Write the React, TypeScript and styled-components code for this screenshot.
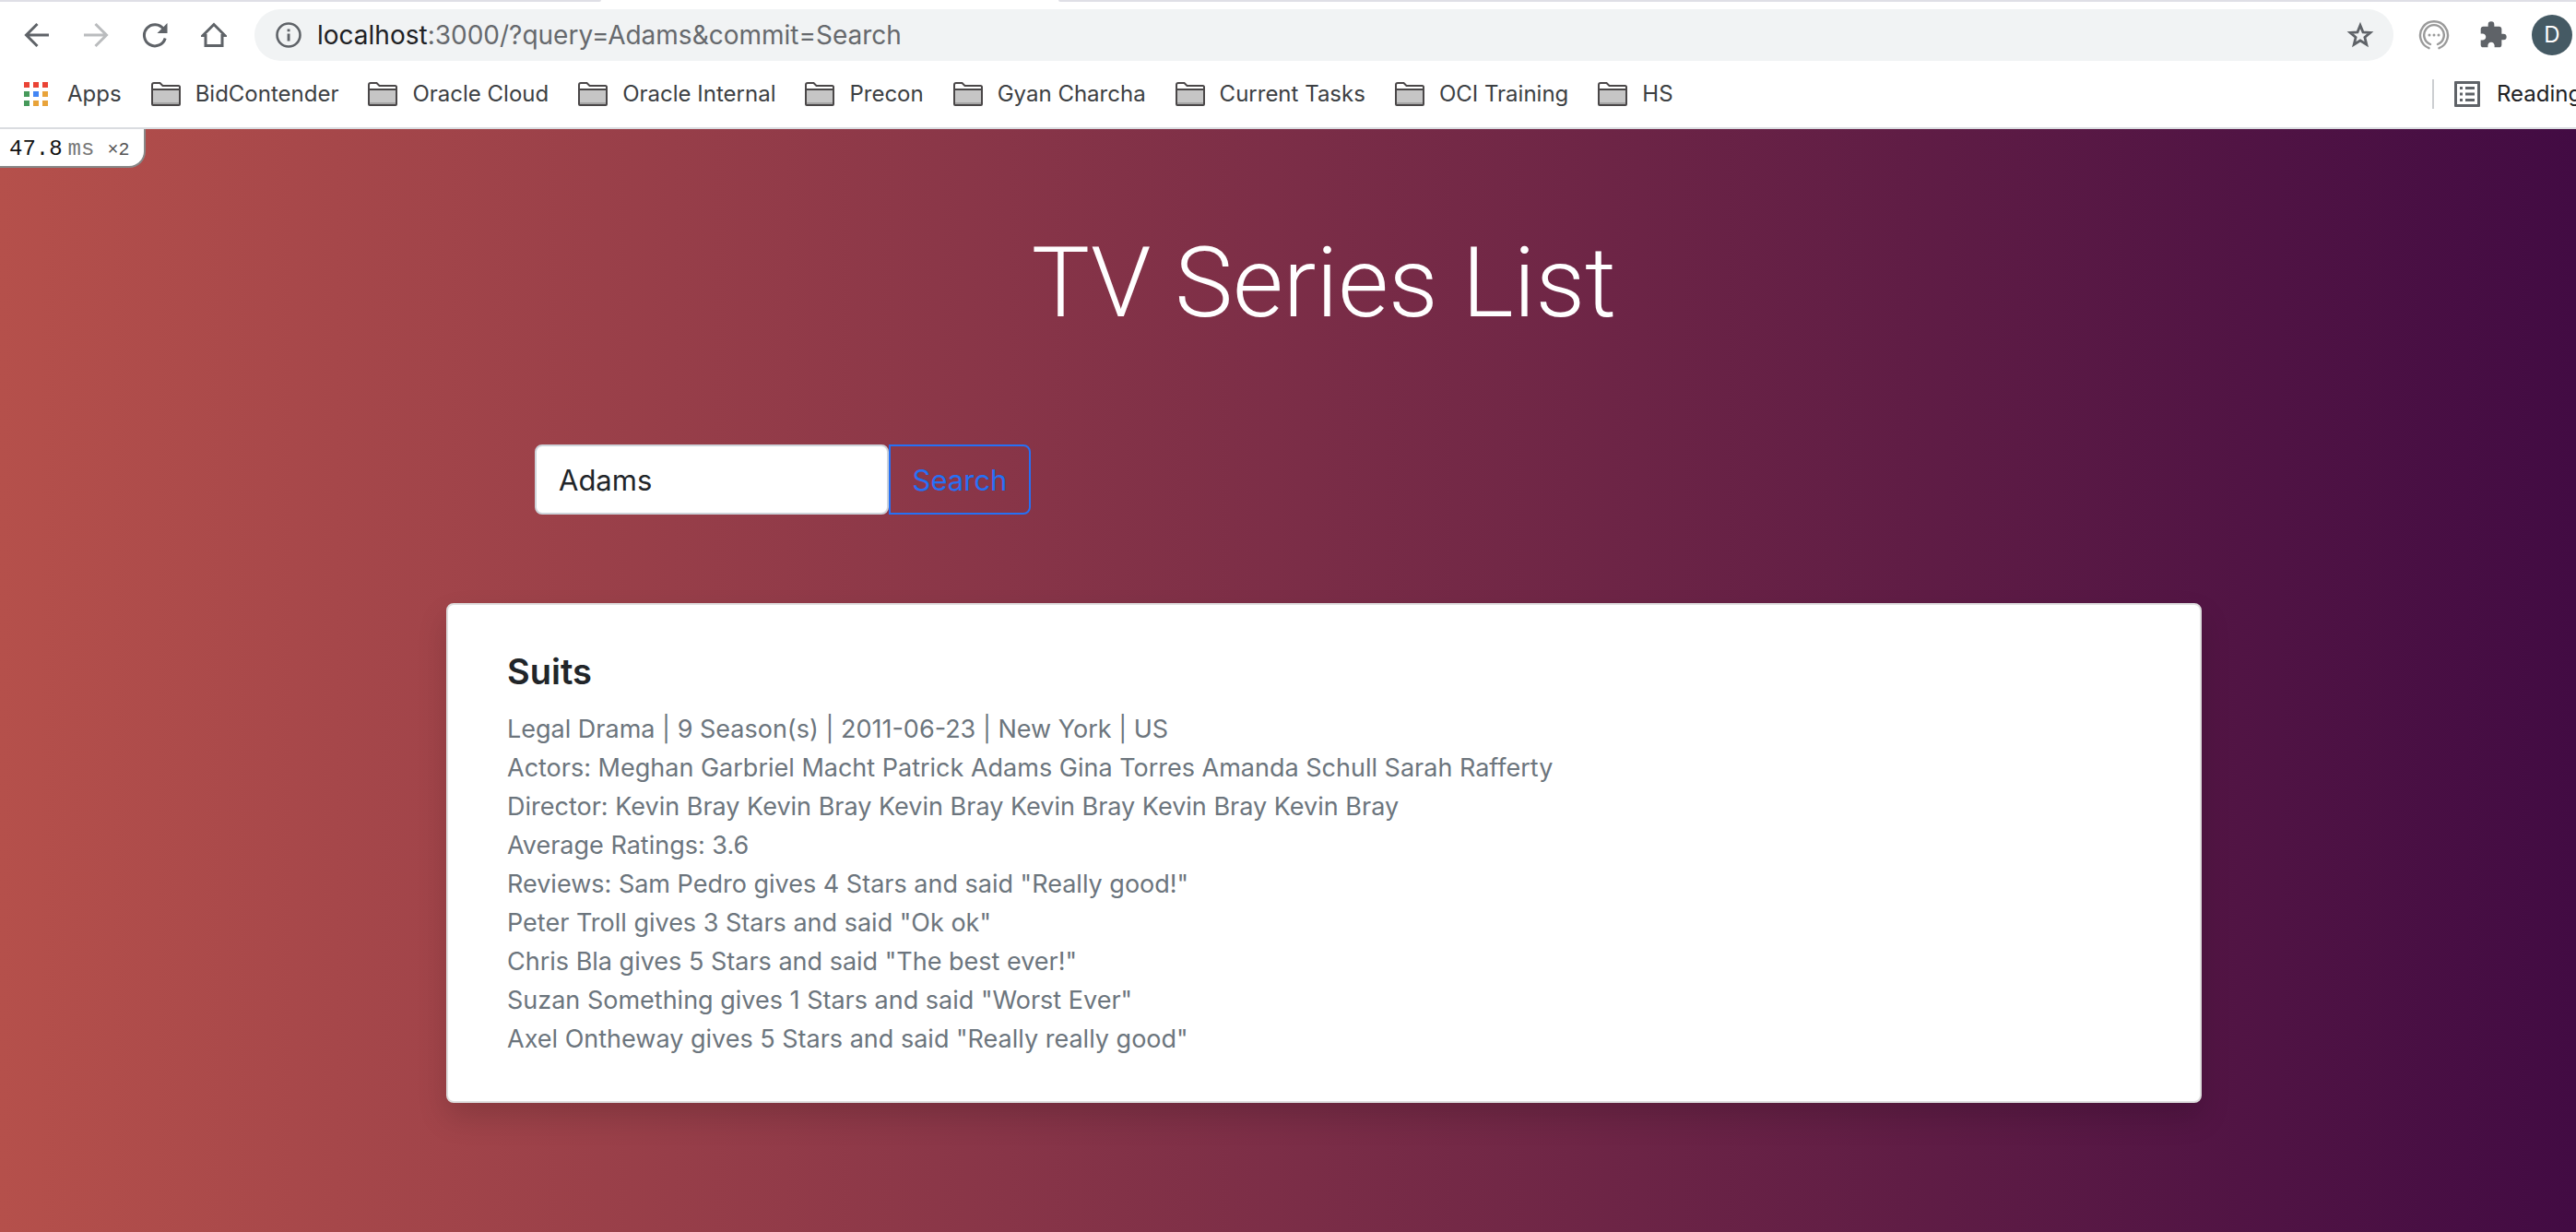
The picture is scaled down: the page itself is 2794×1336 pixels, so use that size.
import React from "react";
import styled, { createGlobalStyle } from "styled-components";

const GlobalStyle = createGlobalStyle`
  *, *::before, *::after { box-sizing: border-box; }
  body {
    margin: 0;
    overflow-x: hidden;
    font-family: Inter, "Liberation Sans", sans-serif;
    color: #212529;
  }
`;

const Window = styled.div`
  display: flex;
  flex-direction: column;
  min-height: 100vh;
`;

const TabStrip = styled.div`
  display: grid;
  grid-template-columns: 652px 496px 1fr;
  height: 2px;
  background: #fff;
`;

const TabEdge = styled.div<{ $side: "left" | "right" }>`
  grid-column: ${(p) => (p.$side === "left" ? 1 : 3)};
  background: #dfdfe6;
  border-radius: ${(p) => (p.$side === "left" ? "0 0 4px 0" : "0 0 0 4px")};
`;

const Toolbar = styled.header`
  display: flex;
  align-items: center;
  height: 72px;
  padding: 0 4px 0 8px;
  background: #fff;
`;

const IconButton = styled.button<{ $dim?: boolean }>`
  display: grid;
  place-items: center;
  width: 64px;
  height: 56px;
  padding: 0;
  border: 0;
  background: none;
  color: ${(p) => (p.$dim ? "#babcbe" : "#5f6368")};
`;

const NavButtons = styled.nav`
  display: flex;
  margin-right: 12px;
`;

const AddressBar = styled.div`
  flex: 1;
  display: flex;
  align-items: center;
  height: 56px;
  padding: 0 4px 0 22px;
  border-radius: 28px;
  background: #f1f3f4;
  color: #5f6368;
`;

const Address = styled.div`
  flex: 1;
  margin-left: 16px;
  font-size: 28px;
  line-height: 40px;
  color: #66696d;
`;

const Host = styled.span`
  color: #202124;
`;

const Extensions = styled.div`
  display: flex;
  align-items: center;
  margin-left: 12px;
`;

const Avatar = styled.button`
  width: 44px;
  height: 44px;
  margin-left: 10px;
  padding: 0;
  border: 0;
  border-radius: 50%;
  background: #455a64;
  color: #fff;
  font: 400 24px/44px Inter, "Liberation Sans", sans-serif;
`;

const BookmarksBar = styled.nav`
  display: flex;
  align-items: center;
  gap: 32px;
  height: 66px;
  padding: 0 0 8px 26px;
  border-bottom: 2px solid #dadce0;
  background: #fff;
  overflow: hidden;
`;

const Bookmark = styled.a<{ $gap?: number }>`
  display: flex;
  align-items: center;
  gap: ${(p) => p.$gap ?? 16}px;
  color: #3c4043;
  font-size: 24px;
  line-height: 32px;
  text-decoration: none;
  white-space: nowrap;
`;

const ReadingList = styled.button`
  display: flex;
  align-items: center;
  gap: 18px;
  width: 156px;
  height: 32px;
  margin-left: auto;
  padding: 0 0 0 22px;
  border: 0;
  border-left: 2px solid #ccced1;
  background: none;
  color: #202124;
  font: 400 24px/32px Inter, "Liberation Sans", sans-serif;
  white-space: nowrap;

  svg { flex: none; }
`;

const Page = styled.div`
  position: relative;
  flex: 1;
  padding: 100px 0 96px 78px;
  background: linear-gradient(90deg, #b5504b, #420b43);
`;

const Profiler = styled.div`
  position: absolute;
  top: 0;
  left: 0;
  display: flex;
  align-items: baseline;
  height: 42px;
  padding: 0 16px 0 10px;
  border: solid #888;
  border-width: 0 2px 2px 0;
  border-radius: 0 0 18px 0;
  background: #fff;
  color: #111;
  font: 400 24px/44px "Liberation Mono", monospace;
`;

const Unit = styled.span`
  margin-left: 6px;
  color: #777;
`;

const Count = styled.span`
  margin-left: 14px;
  color: #555;
  font-size: 20px;
`;

const Container = styled.main`
  max-width: 1904px;
  margin: 0 auto;
`;

const Title = styled.h1`
  margin: 0;
  color: #fff;
  font-family: Roboto, "Liberation Sans", sans-serif;
  font-size: 106px;
  font-weight: 300;
  line-height: 134px;
  text-align: center;
`;

const SearchForm = styled.form`
  display: flex;
  height: 76px;
  margin: 108px 96px 96px;
`;

const SearchBox = styled.input`
  width: 384px;
  padding: 2px 24px 0;
  border: 2px solid #ced4da;
  border-radius: 8px;
  background: #fff;
  color: #212529;
  font: 400 31px/48px Inter, "Liberation Sans", sans-serif;
`;

const SearchButton = styled.button`
  width: 154px;
  padding: 2px 0 0;
  border: 2px solid #2670f5;
  border-radius: 0 8px 8px 0;
  background: transparent;
  color: #2670f5;
  font: 400 31px/48px Inter, "Liberation Sans", sans-serif;
`;

const Card = styled.article`
  padding: 48px 64px 46px;
  border: 2px solid #dfdfdf;
  border-radius: 8px;
  background: #fff;
  box-shadow: 0 16px 32px rgba(0, 0, 0, 0.15);
`;

const CardTitle = styled.h2`
  margin: 0 0 18px;
  font-size: 38px;
  font-weight: 600;
  line-height: 48px;
`;

const Line = styled.p`
  margin: 0;
  color: #6c757d;
  font-size: 27px;
  line-height: 42px;
`;

const BackIcon = () => (
  <svg width="28" height="28" viewBox="0 0 28 28" fill="none" stroke="currentColor" strokeWidth="3">
    <path d="M27 14H3M14.500 2 2.500 14l12 12" />
  </svg>
);

const ForwardIcon = () => (
  <svg width="28" height="28" viewBox="0 0 28 28" fill="none" stroke="currentColor" strokeWidth="3">
    <path d="M1 14h24M13.500 2l12 12-12 12" />
  </svg>
);

const ReloadIcon = () => (
  <svg width="28" height="28" viewBox="0 0 28 28">
    <path d="M23.500 7.500A11.600 11.600 0 1 0 25.200 17.500" fill="none" stroke="currentColor" strokeWidth="3" />
    <path d="M27.500 1v11h-11z" fill="currentColor" />
  </svg>
);

const HomeIcon = () => (
  <svg width="28" height="28" viewBox="0 0 28 28" fill="none" stroke="currentColor" strokeWidth="3">
    <path d="M2 14.500 14 2.500l12 12h-3v11h-18v-11z" />
  </svg>
);

const InfoIcon = () => (
  <svg width="30" height="30" viewBox="0 0 30 30">
    <circle cx="15" cy="15" r="12.500" fill="none" stroke="currentColor" strokeWidth="2.600" />
    <path d="M13.600 13.500h2.900v8h-2.900zM13.600 8.500h2.900v2.800h-2.900z" fill="currentColor" />
  </svg>
);

const StarIcon = () => (
  <svg width="30" height="30" viewBox="0 0 30 30" fill="none" stroke="currentColor" strokeWidth="2.800">
    <path d="M15 4.500l3 7.300 7.900.6-6 5.100 1.900 7.700-6.800-4.200-6.800 4.200 1.900-7.700-6-5.100 7.900-.6z" />
  </svg>
);

const BroadcastIcon = () => (
  <svg width="34" height="34" viewBox="0 0 34 34" fill="none" stroke="#9a9a9a" strokeWidth="2.400" strokeLinecap="round">
    <path d="M11.500 31.200A15 15 0 1 1 22.500 31.200M13 27A10.800 10.800 0 1 1 21 27" />
    <path d="M12 17h.010M17 17h.010M22 17h.010" strokeWidth="3" />
  </svg>
);

const PuzzleIcon = () => (
  <svg width="32" height="32" viewBox="0 0 24 24" fill="currentColor">
    <path d="M20.500 11H19V7c0-1.100-.9-2-2-2h-4V3.500a2.500 2.500 0 0 0-5 0V5H4c-1.100 0-1.990.9-1.990 2v3.800H3.500c1.490 0 2.700 1.210 2.700 2.700s-1.210 2.700-2.700 2.700H2V20c0 1.100.9 2 2 2h3.800v-1.500c0-1.490 1.210-2.700 2.700-2.700 1.490 0 2.700 1.210 2.700 2.700V22H17c1.100 0 2-.9 2-2v-4h1.500a2.500 2.500 0 0 0 0-5z" />
  </svg>
);

const AppsIcon = () => {
  const colors = ["#ea4335", "#ea4335", "#ea4335", "#46995a", "#4285f4", "#e8a33a", "#46995a", "#e8a33a", "#e8a33a"];
  return (
    <svg width="27" height="26" viewBox="0 0 27 26">
      {colors.map((c, i) => (
        <rect key={i} x={(i % 3) * 10} y={Math.floor(i / 3) * 10} width="6" height="6" fill={c} />
      ))}
    </svg>
  );
};

const FolderIcon = () => (
  <svg width="32" height="26" viewBox="0 0 32 26">
    <path d="M1 24V3Q1 1 3 1H9.500L12.500 4H29.500Q31 4 31 5.500V24Q31 25 30 25H2Q1 25 1 24Z" fill="#fff" stroke="#4a4748" strokeWidth="2" />
    <path d="M2 9h28v13H2z" fill="#c6c6c6" />
    <path d="M2 22h28v2H2z" fill="#a5a5a5" />
    <path d="M1 8h30" stroke="#4a4748" strokeWidth="2" />
  </svg>
);

const ListIcon = () => (
  <svg width="28" height="28" viewBox="0 0 28 28" fill="#5f6368">
    <path fillRule="evenodd" d="M1 0h26q1 0 1 1v26q0 1-1 1H1q-1 0-1-1V1q0-1 1-1zm2 3v22h22V3z" />
    <path d="M6 6h3v3H6zM12 6h10v3H12zM6 12.500h3v3H6zM12 12.500h10v3H12zM6 19h3v3H6zM12 19h10v3H12z" />
  </svg>
);

const folders = ["BidContender", "Oracle Cloud", "Oracle Internal", "Precon", "Gyan Charcha", "Current Tasks", "OCI Training", "HS"];

const details = [
  "Legal Drama | 9 Season(s) | 2011-06-23 | New York | US",
  "Actors: Meghan Garbriel Macht Patrick Adams Gina Torres Amanda Schull Sarah Rafferty",
  "Director: Kevin Bray Kevin Bray Kevin Bray Kevin Bray Kevin Bray Kevin Bray",
  "Average Ratings: 3.6",
  'Reviews: Sam Pedro gives 4 Stars and said "Really good!"',
  'Peter Troll gives 3 Stars and said "Ok ok"',
  'Chris Bla gives 5 Stars and said "The best ever!"',
  'Suzan Something gives 1 Stars and said "Worst Ever"',
  'Axel Ontheway gives 5 Stars and said "Really really good"',
];

export default function App() {
  return (
    <Window>
      <GlobalStyle />
      <TabStrip>
        <TabEdge $side="left" />
        <TabEdge $side="right" />
      </TabStrip>
      <Toolbar>
        <NavButtons>
          <IconButton aria-label="Back"><BackIcon /></IconButton>
          <IconButton aria-label="Forward" $dim><ForwardIcon /></IconButton>
          <IconButton aria-label="Reload"><ReloadIcon /></IconButton>
          <IconButton aria-label="Home"><HomeIcon /></IconButton>
        </NavButtons>
        <AddressBar>
          <InfoIcon />
          <Address><Host>localhost</Host>:3000/?query=Adams&amp;commit=Search</Address>
          <IconButton aria-label="Bookmark this page"><StarIcon /></IconButton>
        </AddressBar>
        <Extensions>
          <IconButton aria-label="Broadcast"><BroadcastIcon /></IconButton>
          <IconButton aria-label="Extensions"><PuzzleIcon /></IconButton>
          <Avatar aria-label="Profile">D</Avatar>
        </Extensions>
      </Toolbar>
      <BookmarksBar>
        <Bookmark href="#" $gap={20}><AppsIcon />Apps</Bookmark>
        {folders.map((name) => (
          <Bookmark key={name} href="#"><FolderIcon />{name}</Bookmark>
        ))}
        <ReadingList><ListIcon />Reading</ReadingList>
      </BookmarksBar>
      <Page>
        <Profiler>
          <span>47.8</span>
          <Unit>ms</Unit>
          <Count>×2</Count>
        </Profiler>
        <Container>
          <Title>TV Series List</Title>
          <SearchForm onSubmit={(e) => e.preventDefault()}>
            <SearchBox type="text" name="query" aria-label="Search series" defaultValue="Adams" />
            <SearchButton type="submit">Search</SearchButton>
          </SearchForm>
          <Card>
            <CardTitle>Suits</CardTitle>
            {details.map((line) => (
              <Line key={line}>{line}</Line>
            ))}
          </Card>
        </Container>
      </Page>
    </Window>
  );
}
